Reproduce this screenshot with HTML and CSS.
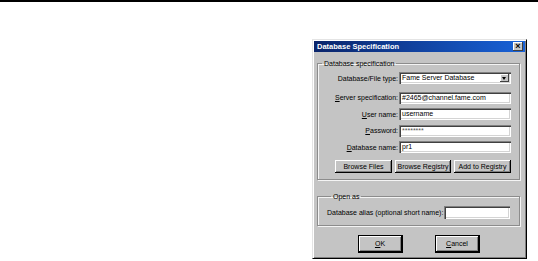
FILE: index.html
```html
<!DOCTYPE html>
<html lang="en">
<head>
    <meta charset="UTF-8">
    <meta name="viewport" content="width=device-width, initial-scale=1.0">
    <title>Database Specification</title>
    <link rel="stylesheet" href="styles.css">
</head>
<body>
    <div class="rule"></div>
    <div class="page">
        <div class="dialog">
            <div class="titlebar">
                <span>Database Specification</span>
                <span class="close">&#215;</span>
            </div>
            <div class="dialog-body">
                <fieldset class="group">
                    <legend>Database specification</legend>
                    <div class="rows">
                        <label>Database/File type:</label>
                        <div class="field select"><span>Fame Server Database</span><span class="arrow"></span></div>
                        <label class="first"><u>S</u>erver specification:</label>
                        <div class="field first">#2465@channel.fame.com</div>
                        <label><u>U</u>ser name:</label>
                        <div class="field">username</div>
                        <label><u>P</u>assword:</label>
                        <div class="field pw">********</div>
                        <label><u>D</u>atabase name:</label>
                        <div class="field">pr1</div>
                        <div class="buttons">
                            <button class="btn files">Browse Files</button>
                            <button class="btn reg">Browse Registry</button>
                            <button class="btn add">Add to Registry</button>
                        </div>
                    </div>
                </fieldset>
                <fieldset class="group open">
                    <legend>Open as</legend>
                    <div class="alias">
                        <label>Database alias (optional short name):</label>
                        <div class="field alias-field"></div>
                    </div>
                </fieldset>
                <div class="footer">
                    <button class="btn main"><u>O</u>K</button>
                    <button class="btn main"><u>C</u>ancel</button>
                </div>
            </div>
        </div>
    </div>
</body>
</html>
```
FILE: styles.css
```css
body { margin: 0; background: #fff; font-family: "Liberation Sans", Arial, sans-serif; font-size: 7px; color: #000; }
.rule { height: 2px; background: #000; }
.page { display: flex; justify-content: flex-end; padding: 37px 11px 0 0; }

.dialog { width: 215px; height: 220px; box-sizing: border-box; background: #c4c4c4; border: 1px solid; border-color: #e4e4e4 #000 #000 #e4e4e4; box-shadow: inset 1px 1px #fff, inset -1px -1px #808080; padding: 1px; }
.titlebar { height: 11px; display: flex; align-items: center; justify-content: space-between; padding: 0 2px 0 3px; background: linear-gradient(to right, #0a246a, #1862d8); color: #fff; font-weight: bold; font-size: 7.5px; }
.close { width: 10px; height: 9px; line-height: 9px; text-align: center; background: #c4c4c4; color: #000; font-size: 9px; font-weight: bold; box-shadow: inset -1px -1px #404040, inset 1px 1px #fff; }

.dialog-body { padding: 0 5px 0 3px; }
.group { margin: 8px 0 0; padding: 5px 8px 6px 0; border: 1px solid #8c8c8c; box-shadow: 1px 1px #f4f4f4, inset 1px 1px #f4f4f4; }
.group legend { margin-left: 4px; padding: 0 2px; }

.rows { display: grid; grid-template-columns: 1fr 112px; column-gap: 1px; row-gap: 4.5px; align-items: center; }
.rows label { text-align: right; white-space: nowrap; }
.rows .first { margin-top: 3px; }

.field { height: 12px; box-sizing: border-box; background: #fff; color: #000; padding: 0 3px; line-height: 11px; white-space: nowrap; box-shadow: inset 1px 1px #808080, inset 2px 2px #404040, inset -1px -1px #fff, inset -2px -2px #d4d4d4; }
.pw { color: #555; }
.select { display: flex; justify-content: space-between; padding-right: 2px; }
.arrow { width: 9px; height: 8px; margin-top: 2px; background: #c4c4c4; box-shadow: inset -1px -1px #404040, inset 1px 1px #fff; position: relative; }
.arrow::after { content: ""; position: absolute; left: 2px; top: 3px; border: 2.5px solid transparent; border-top: 3px solid #000; border-bottom: 0; }

.buttons { grid-column: 1 / -1; display: flex; justify-content: flex-end; gap: 3px; margin-top: 2px; }
.btn { height: 13px; padding: 0; background: #c4c4c4; border: 0; font: inherit; color: #000; box-shadow: inset -1px -1px #000, inset 1px 1px #fff, inset -2px -2px #808080; }
.files { width: 57px; }
.reg { width: 56px; }
.add { width: 57px; }

.open { margin-top: 13px; padding: 6px 9px 6px 9px; }
.alias { display: flex; align-items: center; gap: 1px; }
.alias label { white-space: nowrap; }
.alias-field { flex: 1; height: 13px; }

.footer { display: flex; justify-content: center; gap: 34px; margin-top: 10px; }
.main { width: 43px; height: 16px; box-shadow: 0 0 0 1px #000, inset -1px -1px #000, inset 1px 1px #fff, inset -2px -2px #808080; }
```
